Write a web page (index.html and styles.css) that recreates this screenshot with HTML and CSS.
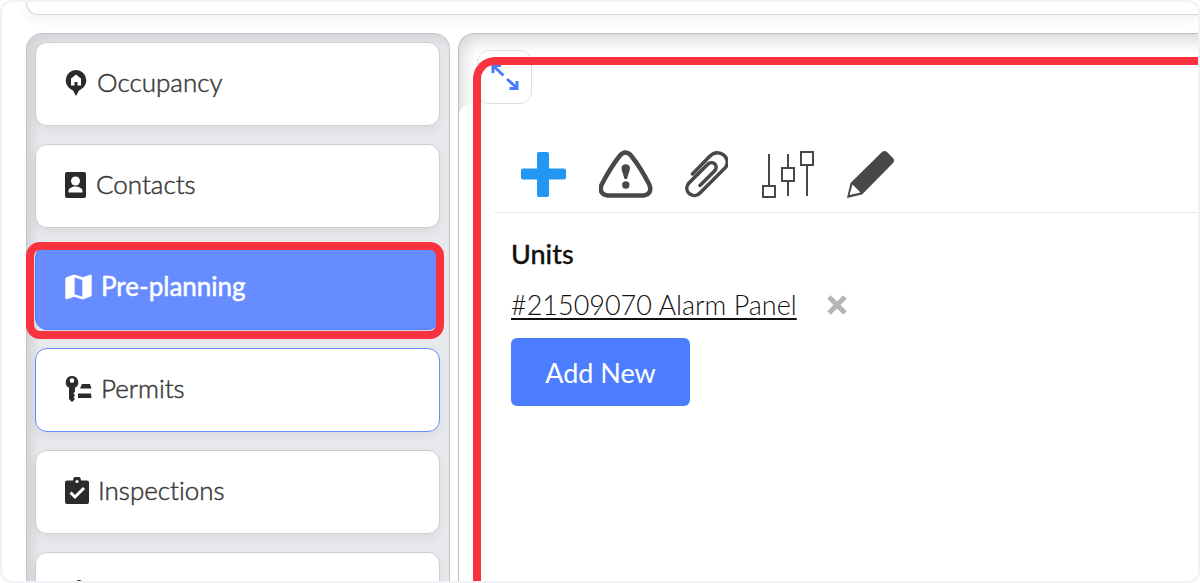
FILE: index.html
```html
<!DOCTYPE html>
<html lang="en">

<head>
  <meta charset="UTF-8">
  <meta name="viewport" content="width=device-width, initial-scale=1.0">
  <title>Pre-planning</title>
  <link rel="stylesheet" href="styles.css">
</head>

<body>
  <div class="page">
    <div class="topCard"></div>
    <div class="columns">
      <nav class="sidebar">
        <a class="item" href="#">
          <svg width="23" height="28" viewBox="0 0 23 28">
            <path d="M11 1a10.300 10.300 0 0 0-10.300 10.300c0 5 3.500 8.500 7.300 10.200l3 5.500 3-5.500c3.800-1.700 7.300-5.200 7.300-10.200A10.300 10.300 0 0 0 11 1z" fill="#2b2b2b" />
            <path d="M11 5.500l5.500 4.500h-.5v6.500h-3.500v-3.500h-3v3.500H6V10h-.5z" fill="#fff" />
          </svg>
          <span>Occupancy</span>
        </a>
        <a class="item" href="#">
          <svg width="22" height="28" viewBox="0 0 22 28">
            <rect y="1" width="21" height="26" rx="2" fill="#2b2b2b" />
            <circle cx="10.500" cy="10" r="4.500" fill="#fff" />
            <path d="M3.500 21.500v-1.500c0-3 4-4.500 7-4.500s7 1.500 7 4.500v1.500z" fill="#fff" />
          </svg>
          <span>Contacts</span>
        </a>
        <a class="item active" href="#">
          <svg width="27" height="28" viewBox="0 0 28 28">
            <path fill-rule="evenodd" d="M1.500 4L9.500 1l9 3L26 1.200q1.700-.5 1.700 1.200v20q0 1-1 1.400L18.500 27l-9-3-7.600 2.700Q.3 27.200.3 25.500V5.700Q.3 4.500 1.500 4zM10 4.200v17.200l8 2.600V6.800z" fill="#fff" />
          </svg>
          <span>Pre-planning</span>
          <i class="mark"></i>
        </a>
        <a class="item focused" href="#">
          <svg width="27" height="28" viewBox="0 0 27 28">
            <path fill-rule="evenodd" d="M7 1a6.300 6.300 0 0 0-3 11.800V24l3 3 3-3-1.500-1.700L10 20.500 8.500 18.500 10 16.500v-3.700A6.300 6.300 0 0 0 7 1zM7 3.200a2.400 2.400 0 1 1 0 4.800 2.400 2.400 0 0 1 0-4.800z" fill="#2b2b2b" />
            <path d="M17 9h8l1.500 4.500H15zM13 18.500h13l.5 4.500H13z" fill="#2b2b2b" />
          </svg>
          <span>Permits</span>
        </a>
        <a class="item" href="#">
          <svg width="24" height="28" viewBox="0 0 24 28">
            <path d="M2 3.500h6a4 4 0 0 1 8 0h6q2 0 2 2V25q0 2-2 2H2q-2 0-2-2V5.500q0-2 2-2z" fill="#2b2b2b" />
            <circle cx="12" cy="4.500" r="1.600" fill="#fff" />
            <path d="M5.500 15.500l4.500 4.500 9-9" fill="none" stroke="#fff" stroke-width="3" />
          </svg>
          <span>Inspections</span>
        </a>
        <a class="item last" href="#" aria-label="More">
          <svg width="28" height="28" viewBox="0 0 28 28">
            <circle cx="14" cy="4" r="3" fill="#2b2b2b" />
          </svg>
        </a>
      </nav>

      <main class="panel">
        <button class="expand" aria-label="Expand">
          <svg width="30" height="30" viewBox="0 0 30 30" fill="none" stroke="#4a7cff" stroke-width="3">
            <path d="M3 11V3.500h8M3 3.500l10.500 10M17 17l10 9M19.500 26.500H27V19" />
          </svg>
        </button>
        <div class="content">
          <div class="toolbar">
            <button aria-label="Add">
              <svg width="47" height="48" viewBox="0 0 47 48">
                <path d="M19 2h8q2 0 2 2v14.500h15q2 0 2 2v7q0 2-2 2H29V45q0 2-2 2h-8q-2 0-2-2V29.500H3q-2 0-2-2v-7q0-2 2-2h14V4q0-2 2-2z" fill="#2196f3" />
              </svg>
            </button>
            <button aria-label="Warnings">
              <svg width="54" height="48" viewBox="0 0 54 48">
                <path d="M21 5.500q5.500-6 11 0Q42 18 50.500 35q3 9-6 10.500h-36q-9-1.500-6-10.500Q11 18 21 5.500z" fill="none" stroke="#484848" stroke-width="4.500" />
                <path d="M22.500 18c0-5 8.500-5 8.500 0 0 3-2.500 8-3 11h-2.500c-.5-3-3-8-3-11z" fill="#484848" />
                <circle cx="26.800" cy="35" r="3.700" fill="#484848" />
              </svg>
            </button>
            <button aria-label="Attachments">
              <svg width="43" height="48" viewBox="0 0 43 48" fill="none" stroke="#484848" stroke-width="3.500" stroke-linecap="round">
                <path d="M7.500 24L25 6c9-9 22 2 15.500 11.500L15.500 42.500C9 50-2.500 42 3.500 33.500L22 15c5-5.500 12.500 0 7.500 6L15 35.500" />
              </svg>
            </button>
            <button aria-label="Settings">
              <svg width="54" height="48" viewBox="0 0 54 48" fill="none" stroke="#484848" stroke-width="2">
                <path d="M9 4v32M28 4v14M28 31v15M47 15v31" />
                <path d="M3 36h12v11H3zM22 18h12v13H22zM41 2h12v13H41z" />
              </svg>
            </button>
            <button aria-label="Edit">
              <svg width="48" height="48" viewBox="0 0 48 48">
                <path fill-rule="evenodd" d="M1 48l3.500-15L36 2q2.500-2 5 0l6 6q2 2.500 0 5L16 44.500zM3.500 45l11-2.500-8-8z" fill="#484848" />
              </svg>
            </button>
          </div>
          <section class="units">
            <h2>Units</h2>
            <div class="unit">
              <a href="#">#21509070 Alarm Panel</a>
              <button class="remove" aria-label="Remove">
                <svg width="20" height="20" viewBox="0 0 20 20" stroke="#b5b5b5" stroke-width="5">
                  <path d="M2 2l16 16M18 2L2 18" />
                </svg>
              </button>
            </div>
            <button class="addNew">Add New</button>
          </section>
        </div>
        <div class="outline"></div>
      </main>
    </div>
  </div>
</body>

</html>
```
FILE: styles.css
```css
* {
  padding: 0;
  margin: 0;
  box-sizing: border-box;
}

body {
  font-family: Lato, "Liberation Sans", sans-serif;
  font-variant-ligatures: none;
  background-color: #fff;
}

button {
  background: none;
  border: none;
  font-family: inherit;
}

svg {
  display: block;
}

.page {
  display: flex;
  flex-direction: column;
  height: 100vh;
  overflow: hidden;
  border: 2px solid #f1f1f8;
  border-radius: 12px;
  padding-left: 24px;
}

.topCard {
  flex: none;
  height: 13px;
  margin-bottom: 18px;
  border: 1px solid #d4d4d4;
  border-width: 0 0 1px 1px;
  border-bottom-left-radius: 12px;
  box-shadow: 0 4px 12px rgba(0, 0, 0, 0.07);
}

.columns {
  display: flex;
  flex: 1;
  gap: 8px;
  min-height: 0;
}

.sidebar {
  display: flex;
  flex: none;
  flex-direction: column;
  gap: 18px;
  width: 424px;
  padding: 8px 9px 0 8px;
  background-color: #e8e9ed;
  border: 1px solid #c6c7cb;
  border-bottom: none;
  border-radius: 16px 16px 0 0;
  box-shadow: inset 6px 6px 10px rgba(0, 0, 0, 0.09);
}

.item {
  position: relative;
  display: flex;
  flex: none;
  align-items: center;
  gap: 9px;
  height: 84px;
  padding: 0 0 2px 29px;
  background-color: #fff;
  border: 1px solid #cdcdcd;
  border-radius: 12px;
  box-shadow: 0 4px 10px rgba(0, 0, 0, 0.06);
  color: #3a3a3a;
  font-size: 26px;
  font-weight: 300;
  line-height: 32px;
  text-decoration: none;
  -webkit-text-stroke: 0.5px currentColor;
}

.item span {
  padding-bottom: 2px;
}

.active {
  background-color: #668cff;
  border-color: #4a7cff;
  color: #fff;
  font-weight: 400;
}

.focused {
  border-color: #668cff;
}

.last {
  align-items: flex-start;
  padding-top: 26px;
}

.mark {
  position: absolute;
  inset: -5px -5px -10px -10px;
  border: 8px solid #f8333f;
  border-radius: 14px;
}

.panel {
  position: relative;
  flex: 1;
  min-width: 0;
  margin-right: -24px;
  padding-top: 16px;
  border: 1px solid #bdbdbd;
  border-width: 1px 0 0 1px;
  border-top-left-radius: 16px;
  box-shadow: inset 4px 6px 16px rgba(0, 0, 0, 0.16);
}

.expand {
  display: grid;
  place-items: center;
  width: 55px;
  height: 54px;
  margin-left: 18px;
  background-color: #fff;
  border: 1px solid #dedede;
  border-radius: 12px;
}

.content {
  height: 100%;
  padding: 46px 0 0 35px;
  background-color: #fff;
  border-top-left-radius: 12px;
}

.toolbar {
  display: flex;
  gap: 32px;
  padding: 0 0 14px 26px;
  border-bottom: 1px solid #ebebeb;
}

.units {
  padding: 25px 0 0 17px;
  font-size: 27px;
  line-height: 32px;
}

.units h2 {
  margin-bottom: 19px;
  color: #111;
  font-size: 27px;
  font-weight: 500;
  -webkit-text-stroke: 0.3px currentColor;
}

.unit {
  display: flex;
  align-items: center;
  gap: 30px;
  margin-bottom: 17px;
}

.unit a {
  color: #111;
  font-weight: 300;
  text-decoration-thickness: 2px;
  text-underline-offset: 3px;
}

.addNew {
  width: 179px;
  height: 68px;
  background-color: #4d7dff;
  border-radius: 6px;
  color: #fff;
  font-size: 27px;
}

.outline {
  position: absolute;
  inset: 23px 0 0 14px;
  border: 8px solid #f8333f;
  border-width: 8px 0 0 8px;
  border-top-left-radius: 22px;
  pointer-events: none;
}
```
